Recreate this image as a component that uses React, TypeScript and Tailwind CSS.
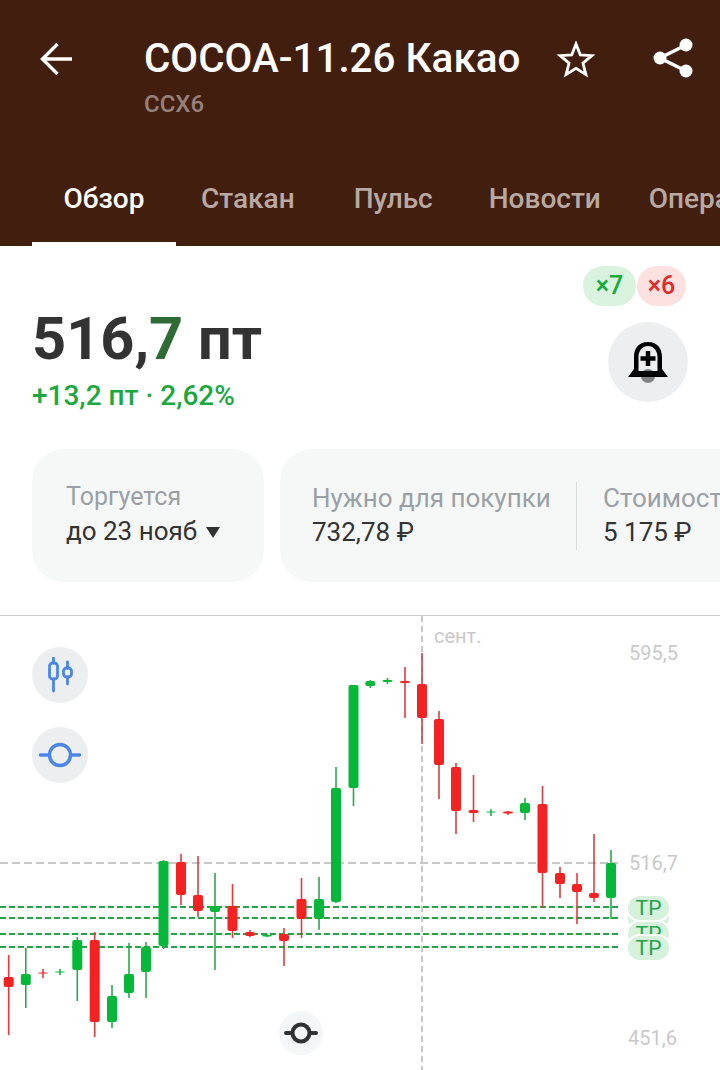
import React from "react";

// x, wickTop, wickBottom, bodyTop, bodyBottom, up
const candles: [number, number, number, number, number, number][] = [
  [8.7, 955, 1035, 977, 987, 0],
  [25.8, 948, 1008, 974, 985, 1],
  [43, 969, 978, 972.5, 973.5, 0],
  [60, 969, 975, 971.5, 972.5, 1],
  [77.3, 937, 1001, 940, 970, 1],
  [94.7, 932, 1037, 940, 1022, 0],
  [112, 985, 1028, 996, 1022, 1],
  [129, 943, 998, 974, 993, 1],
  [146, 942, 998, 947, 972, 1],
  [163.5, 860, 949, 861, 946, 1],
  [181, 854, 905, 862, 895, 0],
  [198, 856, 917, 895, 911, 0],
  [215, 873, 970, 906, 912, 1],
  [232.5, 884, 938, 906, 931, 0],
  [250, 930, 937, 932, 936, 0],
  [267, 934, 937, 935, 936.5, 1],
  [284, 928, 966, 934, 941, 0],
  [301.5, 878, 938, 899, 919, 0],
  [319, 877, 930, 899, 919, 1],
  [336, 767, 903, 788, 902, 1],
  [353.5, 685, 806, 685, 788, 1],
  [370.3, 680, 688, 681, 686, 1],
  [387.5, 678, 684, 680, 682, 1],
  [405, 667, 718, 681, 683, 0],
  [422, 653, 744, 684, 718, 0],
  [439, 711, 799, 719, 765, 0],
  [456, 763, 834, 767, 811, 0],
  [473.5, 775, 822, 810, 813, 0],
  [491, 809, 816, 811.5, 812.5, 1],
  [508, 811, 815, 811.5, 813.5, 0],
  [525, 798, 820, 803, 813, 1],
  [542.5, 786, 908, 804, 873, 0],
  [560, 867, 898, 873, 884, 0],
  [577, 873, 924, 884, 892, 0],
  [594, 834, 902, 893, 898, 0],
  [611, 850, 919, 863, 898, 1],
];

function Tab({ label, active, className }: { label: string; active?: boolean; className: string }) {
  return (
    <div
      className={`shrink-0 h-[82px] flex items-center justify-center whitespace-nowrap text-[28px] font-medium ${
        active ? "text-white border-b-[4px] border-white pb-[8px]" : "text-[#b9a9a2] pb-[12px]"
      } ${className}`}
    >
      {label}
    </div>
  );
}

function LineIcon({ color, width }: { color: string; width: number }) {
  return (
    <svg width="42" height="28" viewBox="0 0 42 28" fill="none" stroke={color}>
      <circle cx="21" cy="14" r="10.5" strokeWidth={width} />
      <path d="M1.5 14h8M32.5 14h8" strokeWidth={width} strokeLinecap="round" />
    </svg>
  );
}

function Tp({ className }: { className: string }) {
  return (
    <div
      className={`absolute left-[628px] w-[41px] h-[24px] rounded-[12px] bg-[#d6f1dc] ring-2 ring-white flex items-center justify-center text-[21px] text-[#22a447] leading-none ${className}`}
    >
      TP
    </div>
  );
}

export default function App() {
  return (
    <div
      className="w-[720px] h-[1070px] overflow-hidden bg-white flex flex-col"
      style={{ fontFamily: "Roboto, 'Noto Sans', sans-serif" }}
    >
      <header className="h-[246px] shrink-0 bg-[#421e0e] flex flex-col overflow-hidden">
        <div className="flex items-start h-[164px] pt-[37px]">
          <div className="w-[144px] pl-[40px] pt-[5px] shrink-0">
            <svg width="34" height="34" viewBox="0 0 34 34" fill="none" stroke="#fff" strokeWidth="3.4">
              <path d="M32 17H3M17.5 2 2.5 17l15 15" />
            </svg>
          </div>
          <div className="w-[412px] shrink-0">
            <div className="text-[40.4px] leading-[44px] font-medium text-white whitespace-nowrap">COCOA-11.26 Какао</div>
            <div className="text-[24px] leading-[28px] mt-[9px] text-[#96807a] font-medium">CCX6</div>
          </div>
          <svg width="40" height="38" viewBox="0 0 24 23" fill="none" stroke="#fff" strokeWidth="1.7" strokeLinejoin="miter" className="shrink-0 mt-[3px]">
            <path d="M12 2.4 14.6 9l7 .5-5.4 4.5 1.8 6.9L12 17.2 6 20.9 7.8 14 2.4 9.500l7-.5z" />
          </svg>
          <svg width="42" height="42" viewBox="0 0 42 42" fill="#fff" className="shrink-0 ml-[56px]">
            <circle cx="34" cy="8" r="6.500" />
            <circle cx="8" cy="21" r="6.500" />
            <circle cx="34" cy="34" r="6.500" />
            <path d="M34 8 8 21l26 13" fill="none" stroke="#fff" strokeWidth="3.6" />
          </svg>
        </div>
        <div className="flex items-stretch whitespace-nowrap">
          <Tab label="Обзор" active className="w-[144px] ml-[32px]" />
          <Tab label="Стакан" className="ml-[25px]" />
          <Tab label="Пульс" className="ml-[59px]" />
          <Tab label="Новости" className="ml-[56px]" />
          <Tab label="Операции" className="ml-[48px]" />
        </div>
      </header>

      <section className="h-[203px] shrink-0 flex justify-between pl-[32px] pr-[32px]">
        <div className="pt-[58px]">
          <div className="text-[59.5px] leading-[70px] font-bold text-[#333333] whitespace-nowrap">
            516,<span className="text-[#2f6b34]">7</span> пт
          </div>
          <div className="text-[28px] leading-[32px] mt-[6px] font-medium text-[#1aa83f]">+13,2 пт · 2,62%</div>
        </div>
        <div className="flex flex-col items-end pt-[20px]">
          <div className="flex gap-px mr-[2px]">
            <div className="w-[53px] h-[40px] rounded-full bg-[#d9f3de] text-[#17ab3c] text-[25px] font-medium flex items-center justify-center">×7</div>
            <div className="w-[49px] h-[40px] rounded-full bg-[#fde0e0] text-[#e02b2b] text-[25px] font-medium flex items-center justify-center">×6</div>
          </div>
          <div className="mt-[16px] w-[80px] h-[80px] rounded-full bg-[#eceef0] flex items-center justify-center">
            <svg width="40" height="42" viewBox="0 0 40 42">
              <circle cx="20" cy="35" r="7" fill="#808285" />
              <path fillRule="evenodd" d="M20 1C10 1 6 8 6 16v12L0 36h40l-6-8V16C34 8 30 1 20 1Zm0 4c-6 0-9.500 5-9.500 11v14h19V16c0-6-3.500-11-9.500-11Z" fill="#000" />
              <path d="M20 10v15M12.500 17.500h15" stroke="#000" strokeWidth="4.500" />
            </svg>
          </div>
        </div>
      </section>

      <section className="h-[166px] shrink-0 flex items-start gap-[16px] pl-[32px] overflow-hidden">
        <div className="w-[232px] h-[133px] shrink-0 rounded-[32px] bg-[#f6f8f8] pl-[34px] pt-[32px]">
          <div className="text-[25px] leading-[32px] text-[#9aa0a5]">Торгуется</div>
          <div className="text-[26px] leading-[36px] text-[#333333] flex items-center">
            до 23 нояб
            <svg width="14" height="11" viewBox="0 0 14 11" className="ml-[9px] mt-[2px]">
              <path d="M0 0h14L7 11z" fill="#333333" />
            </svg>
          </div>
        </div>
        <div className="w-[520px] h-[133px] shrink-0 rounded-l-[32px] bg-[#f6f8f8] pl-[32px] flex items-center whitespace-nowrap">
          <div className="w-[264px] shrink-0">
            <div className="text-[26px] leading-[32px] text-[#9aa0a5]">Нужно для покупки</div>
            <div className="text-[26px] leading-[36px] text-[#333333]">732,78 ₽</div>
          </div>
          <div className="w-px h-[68px] bg-[#d9dcde] shrink-0" />
          <div className="pl-[26px]">
            <div className="text-[26px] leading-[32px] text-[#9aa0a5]">Стоимость</div>
            <div className="text-[26px] leading-[36px] text-[#333333]">5 175 ₽</div>
          </div>
        </div>
      </section>

      <section className="relative flex-1 border-t border-[#cccccc]">
        <svg className="absolute left-0 top-0" width="720" height="454" viewBox="0 616 720 454" fill="none">
          <path d="M422 616V1070" stroke="#c8c8c8" strokeWidth="2" strokeDasharray="6 4" />
          <path d="M0 863H618" stroke="#c8c8c8" strokeWidth="2" strokeDasharray="8 4" />
          {[907, 918, 934, 947].map((y) => (
            <path key={y} d="M0 0H618" transform={`translate(0 ${y})`} stroke="#22a447" strokeWidth="2.2" strokeDasharray="6 3" />
          ))}
          {candles.map(([x, wt, wb, bt, bb, up], i) => {
            const color = up ? "#05b83a" : "#f32323";
            return (
              <g key={i}>
                <path d={`M${x} ${wt}V${wb}`} stroke={up ? "#2aa84e" : "#e03b3f"} strokeWidth="1.6" />
                <rect x={x - 5} y={bt} width="10" height={bb - bt} rx="2" fill={color} />
              </g>
            );
          })}
        </svg>

        <div className="absolute left-[434px] top-[8px] text-[20px] leading-[24px] text-[#c9c9c9]">сент.</div>
        <div className="absolute left-[629px] top-[25px] text-[20px] leading-[24px] text-[#c9c9c9]">595,5</div>
        <div className="absolute left-[629px] top-[235px] text-[20px] leading-[24px] text-[#c9c9c9]">516,7</div>
        <div className="absolute left-[628px] top-[410px] text-[20px] leading-[24px] text-[#c9c9c9]">451,6</div>

        <Tp className="top-[290px]" />
        <Tp className="top-[280px]" />
        <Tp className="top-[306px]" />
        <Tp className="top-[320px]" />

        <div className="absolute left-[32px] top-[31px] w-[56px] h-[56px] rounded-full bg-[#eceef0] flex items-center justify-center">
          <svg width="28" height="36" viewBox="0 0 28 36" fill="none" stroke="#4a86e8" strokeWidth="2.800" strokeLinecap="round">
            <path d="M7.500 1v5M7.500 22v12M21.500 5v6M21.500 20v7" />
            <rect x="3.500" y="6" width="8" height="16" rx="3" />
            <rect x="17.500" y="11" width="8" height="9" rx="3" />
          </svg>
        </div>
        <div className="absolute left-[32px] top-[111px] w-[56px] h-[56px] rounded-full bg-[#eceef0] flex items-center justify-center">
          <LineIcon color="#4a86e8" width={3.4} />
        </div>
        <div className="absolute left-[279px] top-[395px] w-[44px] h-[44px] rounded-full bg-[#f5f6f7] flex items-center justify-center">
          <svg width="34" height="24" viewBox="0 0 34 24" fill="none" stroke="#2f3336">
            <circle cx="17" cy="12" r="8.500" strokeWidth="4" />
            <path d="M2 12h6M26 12h6" strokeWidth="4" strokeLinecap="round" />
          </svg>
        </div>
      </section>
    </div>
  );
}
